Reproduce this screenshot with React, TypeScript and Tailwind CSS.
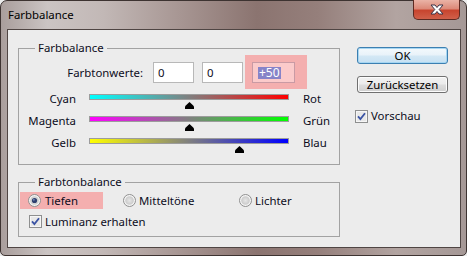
import React from "react";

function Thumb({ value }: { value: number }) {
  const offset = 100 + value - 4.5;
  return (
    <svg width="9" height="7" viewBox="0 0 9 7" className="block mt-[2px]" style={{ marginLeft: offset }}>
      <path d="M4.5 0 L8.2 3.6 L9 4.4 V7 H0 V4.4 L0.8 3.6 Z" fill="#000" />
    </svg>
  );
}

function SliderRow({ left, right, grad, value }: { left: string; right: string; grad: string; value: number }) {
  return (
    <div className="flex h-[22px]">
      <div className="w-[57px] text-right leading-[16px]">{left}</div>
      <div className="ml-[13px] w-[200px] pt-[3px]">
        <div className="h-[6px] border border-[#9c9c9c]">
          <div className={"h-full w-full " + grad} />
        </div>
        <Thumb value={value} />
      </div>
      <div className="ml-[14px] leading-[16px]">{right}</div>
    </div>
  );
}

function Radio({ checked }: { checked?: boolean }) {
  return (
    <svg width="13" height="13" viewBox="0 0 13 13" className="block shrink-0">
      <defs>
        <radialGradient id={checked ? "rgc" : "rgu"} cx="0.5" cy="0.5" r="0.6">
          <stop offset="0" stopColor="#e6e6e6" />
          <stop offset="1" stopColor="#c4c4c4" />
        </radialGradient>
      </defs>
      <circle cx="6.5" cy="6.5" r="6" fill="#f4f4f4" stroke="#8f8f8f" strokeWidth="1" />
      <circle cx="6.5" cy="6.5" r="4.3" fill={checked ? "url(#rgc)" : "url(#rgu)"} />
      {checked && <circle cx="6.5" cy="6.5" r="2.6" fill="#2f3f6e" />}
      {checked && <circle cx="5.8" cy="5.8" r="1" fill="#6f84b4" />}
    </svg>
  );
}

function Check() {
  return (
    <svg width="13" height="13" viewBox="0 0 13 13" className="block shrink-0">
      <rect x="0.5" y="0.5" width="12" height="12" fill="#f6f6f6" stroke="#8e8f8f" />
      <rect x="2" y="2" width="9" height="9" fill="#e8e8e8" />
      <path d="M3 6.3 L5.4 9 L10 3.2" fill="none" stroke="#3a53a4" strokeWidth="1.8" />
    </svg>
  );
}

export default function App() {
  return (
    <div className="w-[467px] h-[256px] bg-[#ececec] font-['Noto_Sans',sans-serif] text-[11.4px] text-[#0c0c1c]">
      <div className="relative w-[467px] h-[256px] rounded-t-[7px] rounded-b-[5px] border border-[#3d3331] bg-[linear-gradient(90deg,#a99e9c_0%,#cbc4c3_10%,#c2b8b6_22%,#a89794_38%,#8b7470_55%,#957f7b_68%,#b2a4a1_85%,#a59896_100%)] flex flex-col">
        <div className="h-[28px] shrink-0 pl-[7px] flex items-center leading-[16px] text-[#000]">Farbbalance</div>
        <div className="absolute top-[-1px] right-[6px] w-[47px] h-[20px] rounded-b-[5px] border border-t-0 border-[#5d2a22] bg-[linear-gradient(180deg,#eab3a6_0%,#dc8a79_45%,#c8452f_55%,#d0604a_100%)] flex items-center justify-center">
          <svg width="16" height="11" viewBox="0 0 16 11">
            <path d="M2 1 H6 L8 3.5 L10 1 H14 L10.2 5.5 L14 10 H10 L8 7.5 L6 10 H2 L5.8 5.5 Z" fill="#ffffff" stroke="#3b3346" strokeWidth="1" strokeLinejoin="round" />
          </svg>
        </div>
        <div className="ml-[6px] w-[454px] h-[219px] shrink-0 border border-[#4f4543] bg-[#ececec] flex">
          <div className="ml-[10px] mt-[10px] flex flex-col">
            <fieldset className="w-[322px] border border-[#a2a2a2] pb-[7px]">
              <legend className="ml-[16px] px-[3px] leading-[16px]">Farbbalance</legend>
              <div className="mt-[6px] flex items-start h-[21px]">
                <div className="w-[124px] text-right leading-[21px]">Farbtonwerte:</div>
                <div className="ml-[10px] w-[41px] h-[21px] border border-[#b8b8b8] bg-white pl-[4px] leading-[19px]">0</div>
                <div className="ml-[8px] w-[41px] h-[21px] border border-[#b8b8b8] bg-white pl-[4px] leading-[19px]">0</div>
                <div className="ml-[2px] -mt-[7px] pt-[7px] pb-[6px] pl-[7px] pr-[12px] bg-[#f4afaf]">
                  <div className="w-[43px] h-[21px] border border-[#c99aa4] bg-[#fbcaca] pl-[5px] flex items-center">
                    <span className="bg-[#8783c8] text-white leading-[12px] px-[1px] text-[12px]">+50</span>
                  </div>
                </div>
              </div>
              <div className="mt-[8px]">
                <SliderRow left="Cyan" right="Rot" grad="bg-[linear-gradient(90deg,#00ffff,#ff0000)]" value={0} />
                <SliderRow left="Magenta" right="Grün" grad="bg-[linear-gradient(90deg,#ff00ff,#00ff00)]" value={0} />
                <SliderRow left="Gelb" right="Blau" grad="bg-[linear-gradient(90deg,#ffff00,#0000ff)]" value={50} />
              </div>
            </fieldset>
            <fieldset className="mt-[9px] w-[322px] border border-[#a2a2a2] pb-[6px]">
              <legend className="ml-[16px] px-[3px] leading-[16px]">Farbtonbalance</legend>
              <div className="mt-[2px] flex items-center h-[17px]">
                <div className="ml-[1px] w-[83px] h-[17px] bg-[#f4afaf] pl-[8px] flex items-center">
                  <Radio checked />
                  <span className="ml-[4px] leading-[16px]">Tiefen</span>
                </div>
                <div className="ml-[20px] w-[116px] flex items-center">
                  <Radio />
                  <span className="ml-[3px] leading-[16px]">Mitteltöne</span>
                </div>
                <div className="flex items-center">
                  <Radio />
                  <span className="ml-[3px] leading-[16px]">Lichter</span>
                </div>
              </div>
              <div className="mt-[4px] flex items-center h-[17px]">
                <div className="ml-[10px]"><Check /></div>
                <span className="ml-[3px] leading-[16px]">Luminanz erhalten</span>
              </div>
            </fieldset>
          </div>
          <div className="ml-[17px] pt-[17px] flex flex-col">
            <button className="w-[91px] h-[17px] rounded-[3px] border border-[#3c7fb1] bg-[linear-gradient(180deg,#f4f9fc_0%,#e8f2f9_48%,#d4e8f5_52%,#c6e0f2_100%)] shadow-[inset_0_0_0_1px_#a6d6f2] flex items-center justify-center leading-[14px] text-[#000]">OK</button>
            <button className="mt-[12px] w-[91px] h-[17px] rounded-[3px] border border-[#707070] bg-[linear-gradient(180deg,#f2f2f2_0%,#ebebeb_48%,#dddddd_52%,#cfcfcf_100%)] shadow-[inset_0_0_0_1px_#fcfcfc] flex items-center justify-center leading-[14px] text-[#000]">Zurücksetzen</button>
            <div className="mt-[15px] -ml-[2px] flex items-center">
              <Check />
              <span className="ml-[3px] leading-[16px]">Vorschau</span>
            </div>
          </div>
        </div>
      </div>
    </div>
  );
}
